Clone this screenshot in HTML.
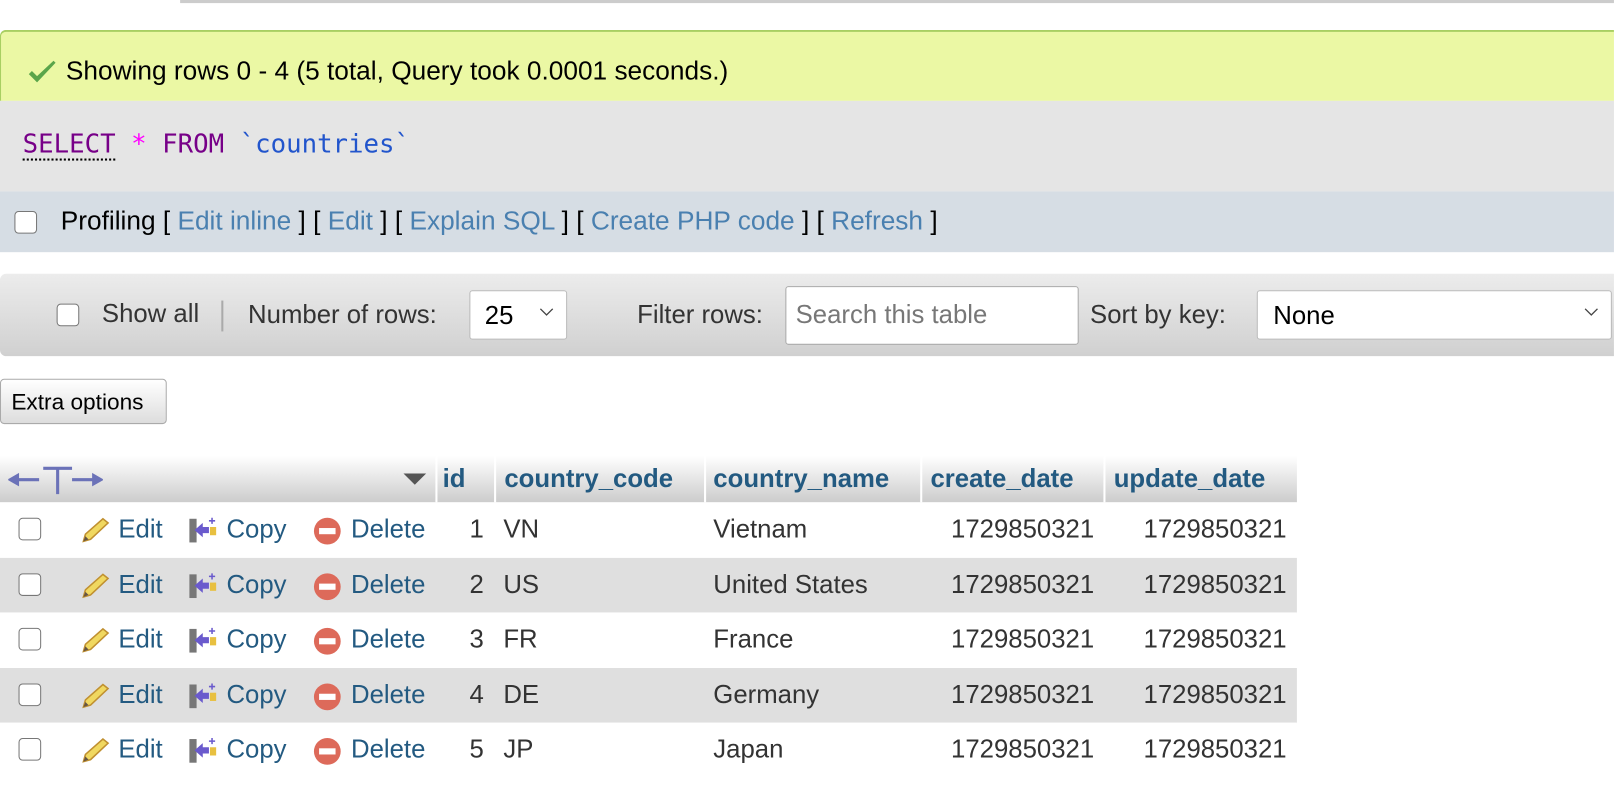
<!DOCTYPE html>
<html><head><style>
body{margin:0;width:1614px;height:796px;overflow:hidden;background:#fff;font-family:"Liberation Sans",Arial,sans-serif;position:relative}
#w{position:absolute;left:0;top:0;width:1568px;height:773px;transform:scale(1.0293);transform-origin:0 0}
.a{position:absolute}
.l{color:#235a81}
.cb{position:absolute;width:22px;height:22px;border:1.5px solid #777;border-radius:4px;background:#fff;box-sizing:border-box}
.row{position:absolute;left:0;width:1260px;height:54px;font-size:25px;color:#333}
.row span{position:absolute;top:12px}
.chev{position:absolute;right:12px;top:16px}
.th{position:absolute;top:451px;font-size:25px;font-weight:bold;color:#235a81}
</style></head><body><div id="w">
<div class="a" style="left:175px;top:0;width:1393px;height:3px;background:#ccc"></div>
<div class="a" style="left:0;top:29px;width:1568px;height:69px;background:#ebf8a4;border-top:2px solid #a8cf62;border-left:1px solid #a8cf62;border-radius:6px 0 0 0;box-sizing:border-box"></div>
<svg class="a" style="left:26px;top:58px" width="30" height="26" viewBox="0 0 30 26"><path d="M2 14 L10 22 L28 3 L26 1 L10 16 L5 11Z" fill="#5aa54a"/></svg>
<div class="a" style="left:64px;top:55px;font-size:25.5px;color:#000">Showing rows 0 - 4 (5 total, Query took 0.0001 seconds.)</div>
<div class="a" style="left:0;top:98px;width:1568px;height:88px;background:#e5e5e5"></div>
<div class="a" style="left:22px;top:125px;font-family:'DejaVu Sans Mono','Liberation Mono',monospace;font-size:25px"><span style="color:#708;border-bottom:2px dotted #000">SELECT</span> <span style="color:#f0f">*</span> <span style="color:#708">FROM</span> <span style="color:#25c">`countries`</span></div>
<div class="a" style="left:0;top:186px;width:1568px;height:59px;background:#d6dde4"></div>
<div class="cb" style="left:14px;top:205px"></div>
<div class="a" style="left:59px;top:201px;font-size:25.5px;color:#000">Profiling [ <span style="color:#4a80b0">Edit inline</span> ] [ <span style="color:#4a80b0">Edit</span> ] [ <span style="color:#4a80b0">Explain SQL</span> ] [ <span style="color:#4a80b0">Create PHP code</span> ] [ <span style="color:#4a80b0">Refresh</span> ]</div>
<div class="a" style="left:0;top:266px;width:1568px;height:80px;background:linear-gradient(#ececec,#d0d0d0);border-radius:6px 0 0 6px"></div>
<div class="cb" style="left:55px;top:295px"></div>
<div class="a" style="left:99px;top:291px;font-size:25px;color:#333">Show all</div>
<div class="a" style="left:215px;top:292px;width:2px;height:30px;background:#aaa"></div>
<div class="a" style="left:241px;top:292px;font-size:25px;color:#333">Number of rows:</div>
<div class="a" style="left:456px;top:282px;width:95px;height:48px;background:#fff;border:1px solid #bbb;border-radius:3px;box-sizing:border-box;font-size:25px;padding:10px 0 0 14px">25<svg class="chev" width="14" height="9" viewBox="0 0 14 9"><path d="M1 1 L7 7 L13 1" fill="none" stroke="#444" stroke-width="1.3"/></svg></div>
<div class="a" style="left:619px;top:292px;font-size:25px;color:#333">Filter rows:</div>
<div class="a" style="left:763px;top:278px;width:285px;height:57px;background:#fff;border:1.5px solid #aaa;border-radius:3px;box-sizing:border-box;font-size:25px;color:#777;padding:13px 0 0 9px;white-space:nowrap;overflow:hidden">Search this table</div>
<div class="a" style="left:1059px;top:292px;font-size:25px;color:#333">Sort by key:</div>
<div class="a" style="left:1221px;top:282px;width:345px;height:48px;background:#fff;border:1px solid #bbb;border-radius:3px;box-sizing:border-box;font-size:25px;padding:10px 0 0 15px">None<svg class="chev" width="14" height="9" viewBox="0 0 14 9"><path d="M1 1 L7 7 L13 1" fill="none" stroke="#444" stroke-width="1.3"/></svg></div>
<div class="a" style="left:0;top:368px;width:162px;height:44px;background:linear-gradient(#fff,#ddd);border:1px solid #aaa;border-radius:4px;box-sizing:border-box;font-size:22px;padding:9px 0 0 10px;color:#000;white-space:nowrap">Extra options</div>
<div class="a" style="left:0;top:443px;width:1260px;height:45px;background:linear-gradient(#fff,#ccc)"></div>
<div class="a" style="left:423px;top:443px;width:2px;height:45px;background:#fff"></div>
<div class="a" style="left:480px;top:443px;width:2px;height:45px;background:#fff"></div>
<div class="a" style="left:684px;top:443px;width:2px;height:45px;background:#fff"></div>
<div class="a" style="left:894px;top:443px;width:2px;height:45px;background:#fff"></div>
<div class="a" style="left:1072px;top:443px;width:2px;height:45px;background:#fff"></div>
<svg class="a" style="left:8px;top:452px" width="92" height="30" viewBox="0 0 92 30"><path d="M2 14 H30 M2 14 L9 10 V18Z M34 3 H62 M48 3 V28 M62 14 H90 M90 14 L83 10 V18Z" stroke="#6b72b8" stroke-width="3" fill="#6b72b8"/></svg>
<div class="a" style="left:392px;top:460px;width:0;height:0;border-left:11px solid transparent;border-right:11px solid transparent;border-top:11px solid #555"></div>
<div class="th" style="left:430px">id</div>
<div class="th" style="left:490px">country_code</div>
<div class="th" style="left:693px">country_name</div>
<div class="th" style="left:904px">create_date</div>
<div class="th" style="left:1082px">update_date</div>
<div id="rows"></div>
</div>
<script>
var d=[["1","VN","Vietnam"],["2","US","United States"],["3","FR","France"],["4","DE","Germany"],["5","JP","Japan"]];
var h="";
d.forEach(function(r,i){
var t=488+i*53.5;
h+='<div class="row" style="top:'+t+'px;background:'+(i%2?'#dfdfdf':'#fff')+'">'+
'<div class="cb" style="left:18px;top:15px"></div>'+
'<svg style="position:absolute;left:78px;top:14px" width="30" height="26" viewBox="0 0 30 26"><path d="M3 24 L5 17 L22 2 L27 6 L10 22Z" fill="#f0d860" stroke="#c09030" stroke-width="1.5"/><path d="M3 24 L5 19 L8 22Z" fill="#654"/></svg>'+
'<span class="l" style="left:115px">Edit</span>'+
'<svg style="position:absolute;left:183px;top:14px" width="30" height="26" viewBox="0 0 30 26"><rect x="1" y="2" width="7" height="23" fill="#777"/><path d="M6 13 L14 6 L14 10 L20 10 L20 16 L14 16 L14 20Z" fill="#6a5acd"/><rect x="21" y="10" width="6" height="8" fill="#e8c040"/><path d="M23 1v6M20 4h6" stroke="#6a5acd" stroke-width="1.5"/></svg>'+
'<span class="l" style="left:220px">Copy</span>'+
'<svg style="position:absolute;left:304px;top:14px" width="28" height="28" viewBox="0 0 28 28"><circle cx="14" cy="14" r="13" fill="#dd6a5a"/><rect x="6" y="11" width="16" height="6" fill="#fff"/></svg>'+
'<span class="l" style="left:341px">Delete</span>'+
'<span style="right:790px">'+r[0]+'</span><span style="left:489px">'+r[1]+'</span><span style="left:693px">'+r[2]+'</span>'+
'<span style="right:197px">1729850321</span><span style="right:10px">1729850321</span></div>';
});
document.getElementById("rows").innerHTML=h;
</script>
</body></html>
